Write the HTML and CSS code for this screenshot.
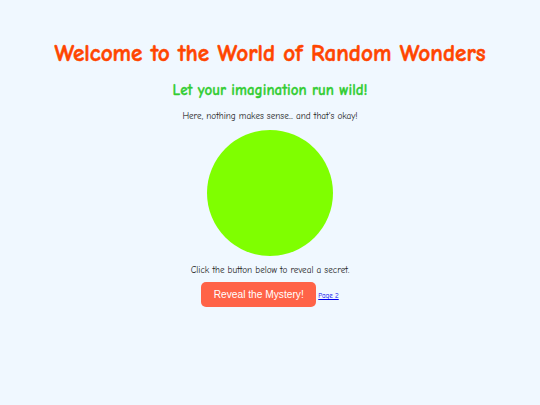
FILE: index.html
```html
<!DOCTYPE html>
<html>
<head>
<meta charset="utf-8">
<link rel="stylesheet" href="styles.css">
</head>
<body>
<main class="page">
  <h1 class="title">Welcome to the World of Random Wonders</h1>
  <h2 class="subtitle">Let your imagination run wild!</h2>
  <p class="text">Here, nothing makes sense... and that's okay!</p>
  <div class="circle"></div>
  <p class="text hint">Click the button below to reveal a secret.</p>
  <div class="actions">
    <button class="btn">Reveal the Mystery!</button>
    <a class="link" href="#">Page 2</a>
  </div>
</main>
</body>
</html>
```
FILE: styles.css
```css
html, body {
  margin: 0;
  padding: 0;
  background: #f0f8ff;
}
body {
  font-family: "Comic Sans MS", "Comic Neue", "DejaVu Sans", sans-serif;
  width: 540px;
  height: 405px;
  overflow: hidden;
}
.page {
  display: flex;
  flex-direction: column;
  align-items: center;
  padding-top: 40px;
}
.title {
  margin: 0;
  font-size: 23.2px;
  line-height: 28px;
  font-weight: bold;
  color: #ff4500;
  -webkit-text-stroke: 0.5px #ff4500;
}
.subtitle {
  margin: 13px 0 0;
  font-size: 15px;
  line-height: 18px;
  font-weight: bold;
  color: #32cd32;
  -webkit-text-stroke: 0.3px #32cd32;
}
.text {
  margin: 11px 0 0;
  font-size: 9.2px;
  line-height: 12px;
  color: #222;
}
.circle {
  margin-top: 8px;
  width: 126px;
  height: 126px;
  border-radius: 50%;
  background: #7fff00;
}
.hint {
  margin-top: 8px;
}
.actions {
  margin-top: 6px;
  display: flex;
  align-items: center;
}
.btn {
  width: 115px;
  height: 25px;
  border: none;
  border-radius: 5px;
  background: #ff6347;
  color: #fff;
  font-family: "Liberation Sans", Arial, sans-serif;
  font-size: 10.2px;
  padding: 0;
}
.link {
  margin-left: 2px;
  margin-top: 3px;
  font-size: 7px;
  color: #0000ee;
}
```
